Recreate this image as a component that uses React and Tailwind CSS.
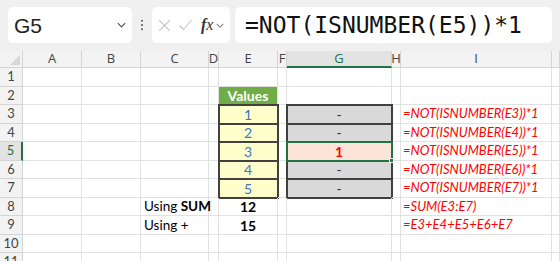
import React from 'react';

const cellFont = { fontFamily: 'Lato, "Open Sans", sans-serif' };

// row heights alternate the way Excel rounds them at this zoom
const rowHeights = ['h-[19px]', 'h-[18px]', 'h-[19px]', 'h-[18px]', 'h-[19px]', 'h-[18px]', 'h-[19px]', 'h-[18px]', 'h-[19px]', 'h-[18px]', 'h-[19px]'];

const formulas = {
  3: '=NOT(ISNUMBER(E3))*1',
  4: '=NOT(ISNUMBER(E4))*1',
  5: '=NOT(ISNUMBER(E5))*1',
  6: '=NOT(ISNUMBER(E6))*1',
  7: '=NOT(ISNUMBER(E7))*1',
  8: '=SUM(E3:E7)',
  9: '=E3+E4+E5+E6+E7',
};

function Chevron({ className }) {
  return (
    <svg viewBox="0 0 10 6" className={className} fill="none" stroke="currentColor" strokeWidth="1.3">
      <path d="M1 1l4 4 4-4" />
    </svg>
  );
}

function Toolbar() {
  return (
    <div className="flex h-[51px] items-start bg-[#f0f0f0] pt-[7px] pl-[8px]">
      <div className="flex h-[36px] w-[124px] items-center justify-between rounded-[5px] bg-white pl-[6px] pr-[6px]">
        <span className="text-[21px] leading-none text-[#222]" style={{ fontFamily: '"Liberation Sans", Arial, sans-serif' }}>G5</span>
        <Chevron className="h-[6px] w-[9px] text-[#555]" />
      </div>
      <div className="flex h-[36px] w-[20px] items-center justify-center">
        <svg viewBox="0 0 4 14" className="h-[12px] w-[4px] text-[#555]" fill="currentColor">
          <circle cx="2" cy="2" r="1.2" />
          <circle cx="2" cy="7" r="1.2" />
          <circle cx="2" cy="12" r="1.2" />
        </svg>
      </div>
      <div className="flex h-[36px] w-[78px] items-center rounded-[5px] bg-white pl-[6px]">
        <svg viewBox="0 0 12 12" className="h-[13px] w-[13px] text-[#c4c4c4]" fill="none" stroke="currentColor" strokeWidth="1.1">
          <path d="M1 1l10 10M11 1L1 11" />
        </svg>
        <svg viewBox="0 0 14 12" className="ml-[7px] h-[12px] w-[15px] text-[#c4c4c4]" fill="none" stroke="currentColor" strokeWidth="1.1">
          <path d="M1 6.5l4 4L13 1" />
        </svg>
        <span className="ml-[8px] text-[16px] italic leading-none text-[#333]" style={{ fontFamily: '"Liberation Serif", serif' }}>
          <span className="font-bold">f</span>x
        </span>
        <Chevron className="ml-[3px] h-[5px] w-[8px] text-[#777]" />
      </div>
      <div className="ml-[5px] flex h-[36px] w-[317px] items-center rounded-[5px] bg-white pl-[10px]">
        <span className="text-[23px] leading-none text-[#111]" style={{ fontFamily: '"DejaVu Sans Mono", monospace' }}>=NOT(ISNUMBER(E5))*1</span>
      </div>
    </div>
  );
}

function HeaderRow() {
  const cols = ['A', 'B', 'C', 'D', 'E', 'F', 'G', 'H', 'I', ''];
  return (
    <>
      <div className="flex h-[17px] items-end justify-end border-b border-r border-[#d4d4d4] bg-[#f3f3f3] pb-[2px] pr-[2px]">
        <svg viewBox="0 0 10 10" className="h-[10px] w-[10px]">
          <path d="M10 0V10H0Z" fill="#d6d6d6" />
        </svg>
      </div>
      {cols.map((c, i) =>
        c === 'G' ? (
          <div key={i} className="flex h-[17px] items-center justify-center border-b-2 border-r border-b-[#217346] border-r-[#d4d4d4] bg-[#e3e3e3] text-[13px] text-[#217346]">
            {c}
          </div>
        ) : (
          <div key={i} className="flex h-[17px] items-center justify-center border-b border-r border-[#d4d4d4] bg-[#f3f3f3] text-[13px] text-[#444]">
            {c}
          </div>
        )
      )}
    </>
  );
}

function Cell({ children, className = '' }) {
  return <div className={'flex items-center whitespace-nowrap border-b border-r border-[#e1e1e1] ' + className}>{children}</div>;
}

function renderRow(r) {
  const h = rowHeights[r - 1];
  const boxed = r >= 3 && r <= 7;
  const e = r - 2;
  return (
    <React.Fragment key={r}>
      {r === 5 ? (
        <div className={h + ' flex items-center justify-center border-b border-r-2 border-b-[#d4d4d4] border-r-[#217346] bg-[#e3e3e3] text-[13px] text-[#217346]'}>{r}</div>
      ) : (
        <div className={h + ' flex items-center justify-center border-b border-r border-[#d4d4d4] bg-[#f3f3f3] text-[13px] text-[#444]'}>{r}</div>
      )}
      <Cell className={h} />
      <Cell className={h} />
      <Cell className={h + ' pl-[3px] text-[13.5px] text-black'}>
        {r === 8 && (
          <span>
            Using <b>SUM</b>
          </span>
        )}
        {r === 9 && <span>Using +</span>}
      </Cell>
      <Cell className={h} />
      {r === 2 ? (
        <Cell className={h + ' justify-center bg-[#70ad47] text-[14px] font-bold text-white'}>Values</Cell>
      ) : boxed ? (
        <Cell className={h + ' justify-center bg-[#ffffcc] text-[14px] text-[#4472c4] outline-2 -outline-offset-1 outline-[#404040]'}>{e}</Cell>
      ) : (
        <Cell className={h + ' justify-center text-[14px] font-bold text-black'}>
          {r === 8 && '12'}
          {r === 9 && '15'}
        </Cell>
      )}
      <Cell className={h} />
      {r === 5 ? (
        <Cell className={h + ' relative z-10 justify-center bg-[#fce4d6] text-[14px] font-bold text-[#ff0000] outline-2 -outline-offset-1 outline-[#217346]'}>
          1
          <span className="absolute -bottom-[3px] -right-[3px] h-[5px] w-[5px] border border-white bg-[#217346]" />
        </Cell>
      ) : boxed ? (
        <Cell className={h + ' justify-center bg-[#d9d9d9] text-[14px] text-[#333] outline-2 -outline-offset-1 outline-[#404040]'}>-</Cell>
      ) : (
        <Cell className={h} />
      )}
      <Cell className={h} />
      <Cell className={h + ' pl-[2px] text-[13px] italic text-[#ff0000]'}>{formulas[r]}</Cell>
      <Cell className={h} />
    </React.Fragment>
  );
}

export default function App() {
  const rows = [1, 2, 3, 4, 5, 6, 7, 8, 9, 10, 11];
  return (
    <div className="h-[261px] w-[560px] overflow-hidden bg-white" style={cellFont}>
      <Toolbar />
      <div className="grid grid-cols-[23px_59px_59px_68px_10px_59px_9px_105px_9px_151px_1fr]" style={{ fontFamily: '"Open Sans", "Liberation Sans", sans-serif' }}>
        <HeaderRow />
      </div>
      <div className="grid grid-cols-[23px_59px_59px_68px_10px_59px_9px_105px_9px_151px_1fr]" style={cellFont}>
        {rows.map(renderRow)}
      </div>
    </div>
  );
}
